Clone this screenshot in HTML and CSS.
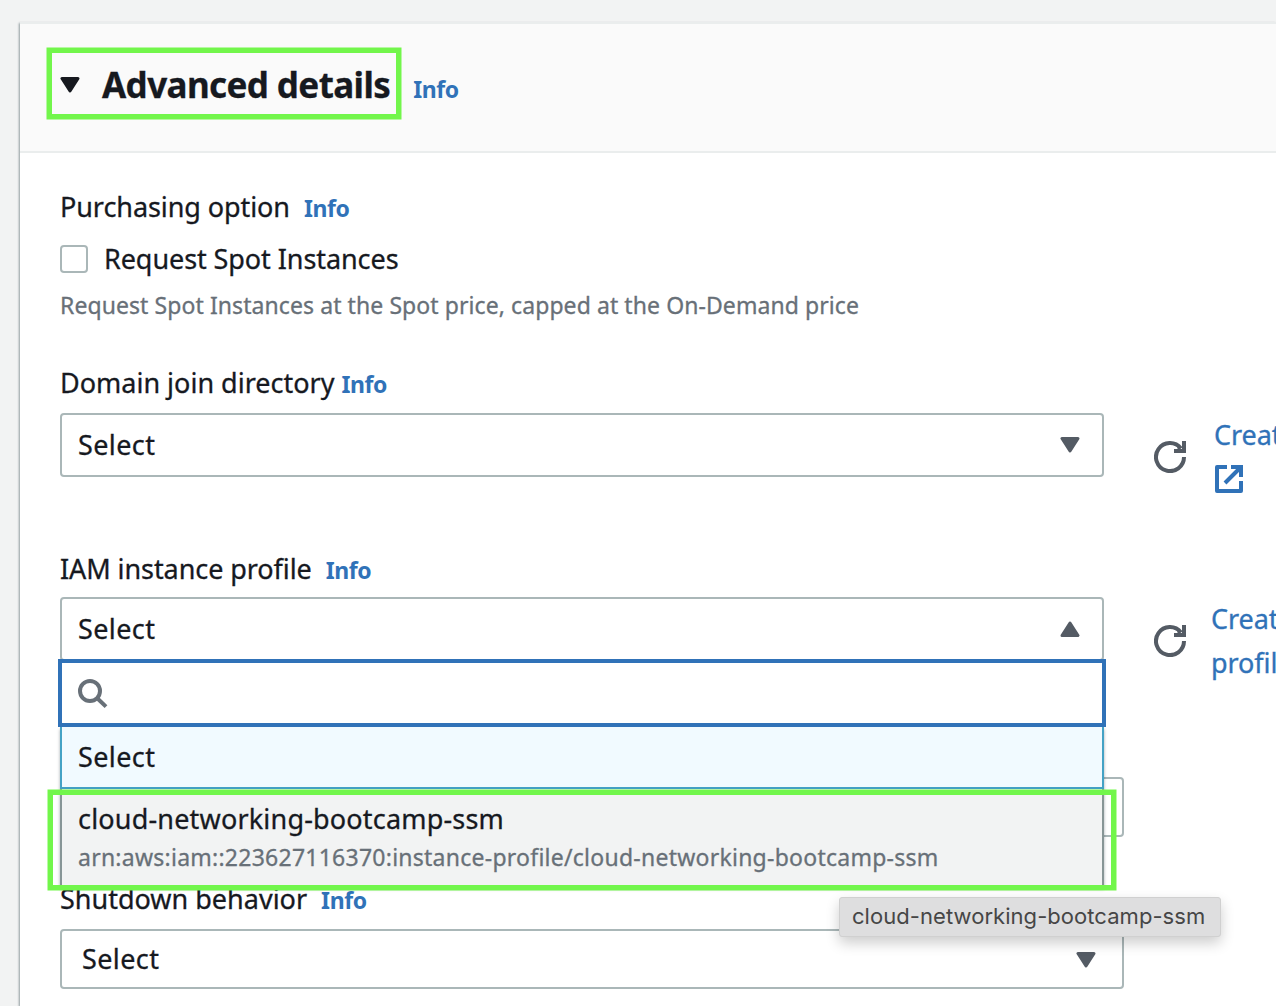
FILE: index.html
```html
<!DOCTYPE html>
<html lang="en">
<head>
<meta charset="utf-8">
<title>Advanced details</title>
<link rel="stylesheet" href="styles.css">
</head>
<body>
<svg class="defs" width="0" height="0" aria-hidden="true">
  <symbol id="caret" viewBox="0 0 20 16"><path d="M2 1.5h16L10 14z" fill="currentColor" stroke="currentColor" stroke-width="3" stroke-linejoin="round"/></symbol>
  <symbol id="refresh" viewBox="0 0 32 32"><g fill="none" stroke="currentColor" stroke-width="4"><path d="M30 16A14 14 0 1 1 27 7.4"/><path d="M20 10h10V0"/></g><path d="M23 5l5 5h-4z" fill="currentColor"/></symbol>
  <symbol id="external" viewBox="0 0 28 28"><g fill="none" stroke="currentColor" stroke-width="4" stroke-linejoin="round"><path d="M12 2H2v24h24V16"/><path stroke-linejoin="miter" d="M16 2h10v10M26 2L10 18"/></g></symbol>
  <symbol id="search" viewBox="0 0 30 30"><g fill="none" stroke="currentColor" stroke-width="4"><circle cx="12" cy="12" r="10"/><path d="M19 19l9 8.6"/></g></symbol>
</svg>
<main class="card">
  <header class="card-header">
    <svg class="caret heading-caret"><use href="#caret"/></svg>
    <h2>Advanced details</h2>
    <a class="info">Info</a>
    <span class="mark mark-heading"></span>
  </header>
  <div class="form">
    <section class="purchasing">
      <div class="label">Purchasing option <a class="info">Info</a></div>
      <label class="check"><span class="box"></span><span class="check-text">Request Spot Instances</span></label>
      <p class="hint">Request Spot Instances at the Spot price, capped at the On-Demand price</p>
    </section>
    <section class="domain">
      <div class="label tight">Domain join directory <a class="info">Info</a></div>
      <div class="row">
        <div class="select"><span>Select</span><svg class="caret"><use href="#caret"/></svg></div>
        <svg class="refresh"><use href="#refresh"/></svg>
        <a class="link link-directory">Create new directory <svg class="external"><use href="#external"/></svg></a>
      </div>
    </section>
    <section class="profile">
      <div class="label">IAM instance profile <a class="info">Info</a></div>
      <div class="row">
        <div class="select open"><span>Select</span><svg class="caret up"><use href="#caret"/></svg>
          <div class="dropdown">
            <div class="search"><svg><use href="#search"/></svg></div>
            <div class="option selected">Select</div>
            <div class="option hovered"><span>cloud-networking-bootcamp-ssm</span><small>arn:aws:iam::223627116370:instance-profile/cloud-networking-bootcamp-ssm</small>
              <span class="mark mark-option"></span>
              <div class="tooltip">cloud-networking-bootcamp-ssm</div>
            </div>
          </div>
        </div>
        <svg class="refresh"><use href="#refresh"/></svg>
        <a class="link">Create<br>profile</a>
      </div>
    </section>
    <section><div class="select wide"></div></section>
    <section class="shutdown">
      <div class="label">Shutdown behavior <a class="info">Info</a></div>
      <div class="select wide"><span>Select</span><svg class="caret"><use href="#caret"/></svg></div>
    </section>
  </div>
</main>
</body>
</html>
```
FILE: styles.css
```css
* { box-sizing: border-box; }
body {
  margin: 0;
  height: 1006px;
  padding: 22px 0 0 20px;
  overflow: hidden;
  background: #f2f3f3;
  color: #16191f;
  font: 27px/37px "Noto Sans", "Open Sans", sans-serif;
  letter-spacing: -0.08px;
  -webkit-text-stroke: .3px currentColor;
}
.defs { position: absolute; }
svg { display: block; flex: none; }
h2, p { margin: 0; }
.card {
  height: 984px;
  background: #fff;
  border-top: 2px solid #eaeded;
  box-shadow: -1px 1px 2px rgba(0, 28, 36, .4);
}
.card-header {
  position: relative;
  display: flex;
  align-items: baseline;
  height: 129px;
  padding: 37px 0 0 40px;
  background: #fafafa;
  border-bottom: 2px solid #eaeded;
}
.card-header h2 {
  margin: 0 23px 0 22px;
  font-size: 35px;
  line-height: 48px;
  letter-spacing: -0.6px;
}
.caret { width: 20px; height: 16px; margin-top: 2px; color: #545b64; }
.heading-caret { align-self: flex-start; margin-top: 16px; color: #16191f; }
.up { transform: rotate(180deg); }
.info { color: #3072b8; font-size: 23px; font-weight: 700; letter-spacing: -0.4px; -webkit-text-stroke: 0; }
.form { padding: 35px 0 0 40px; }
.label { display: flex; align-items: baseline; gap: 14px; height: 37px; }
.tight { gap: 7px; letter-spacing: 0; }
.check { display: flex; align-items: center; gap: 16px; height: 28px; margin-top: 20px; }
.check-text { padding-bottom: 2px; }
.box { width: 28px; height: 28px; border: 2px solid #aab7b8; border-radius: 4px; }
.hint { margin-top: 17px; color: #687078; font-size: 23px; line-height: 30px; letter-spacing: .08px; }
.purchasing { height: 176px; }
.domain { height: 186px; }
.profile { height: 227px; }
.row { display: flex; align-items: flex-start; margin-top: 12px; }
.profile .row { margin-top: 10px; }
.select {
  position: relative;
  flex: none;
  display: flex;
  align-items: center;
  justify-content: space-between;
  width: 1044px;
  height: 64px;
  padding: 0 22px 2px 16px;
  border: 2px solid #aab7b8;
  border-radius: 4px;
  letter-spacing: .4px;
}
.wide { width: 1064px; height: 60px; padding: 0 26px 1px 20px; }
.refresh { width: 32px; height: 32px; margin: 28px 25px 0 50px; color: #545b64; }
.link {
  width: 65px;
  overflow: hidden;
  color: #3072b8;
  line-height: 44px;
  white-space: nowrap;
}
.link-directory { margin-left: 3px; width: 62px; }
.link .external { width: 28px; height: 28px; margin: 8px 0 0 1px; }
.dropdown {
  position: absolute;
  z-index: 2;
  top: 60px;
  left: -4px;
  width: 1048px;
}
.search {
  position: relative;
  z-index: 1;
  height: 68px;
  padding: 16px;
  background: #fff;
  border: 4px solid #3072b8;
}
.search svg { width: 30px; height: 30px; color: #687078; }
.option {
  margin: 0 2px;
  padding: 0 16px;
  border: solid #879596;
  border-width: 0 2px;
  box-shadow: 0 2px 3px rgba(0, 28, 36, .35);
}
.selected { height: 62px; padding-top: 11px; background: #f1faff; border-color: #44a2c5; border-bottom-width: 2px; }
.hovered {
  position: relative;
  height: 98px;
  padding-top: 11px;
  background: #f2f3f3;
  border-bottom-width: 2px;
  letter-spacing: .18px;
}
.hovered small { display: block; color: #687078; font-size: 23px; line-height: 40px; letter-spacing: .25px; }
.mark { position: absolute; border: 5px solid #72f64b; box-shadow: 0 0 0 .5px #72f64b; }
.mark-heading { left: 27px; top: 24px; width: 354px; height: 71px; }
.mark-option { left: -14px; top: 1px; width: 1068px; height: 100px; }
.tooltip {
  position: absolute;
  left: 777px;
  top: 108px;
  width: 382px;
  height: 40px;
  padding-left: 12px;
  background: #dededf;
  border: 1px solid #d0d0d0;
  border-radius: 3px;
  box-shadow: 0 6px 14px rgba(0, 0, 0, .2);
  color: #464646;
  font: 22px/36px Inter, sans-serif;
  letter-spacing: .05px;
  white-space: nowrap;
  -webkit-text-stroke: 0;
}
.shutdown .label { margin-top: 43px; letter-spacing: 0; }
.shutdown .select { margin-top: 12px; }
```
